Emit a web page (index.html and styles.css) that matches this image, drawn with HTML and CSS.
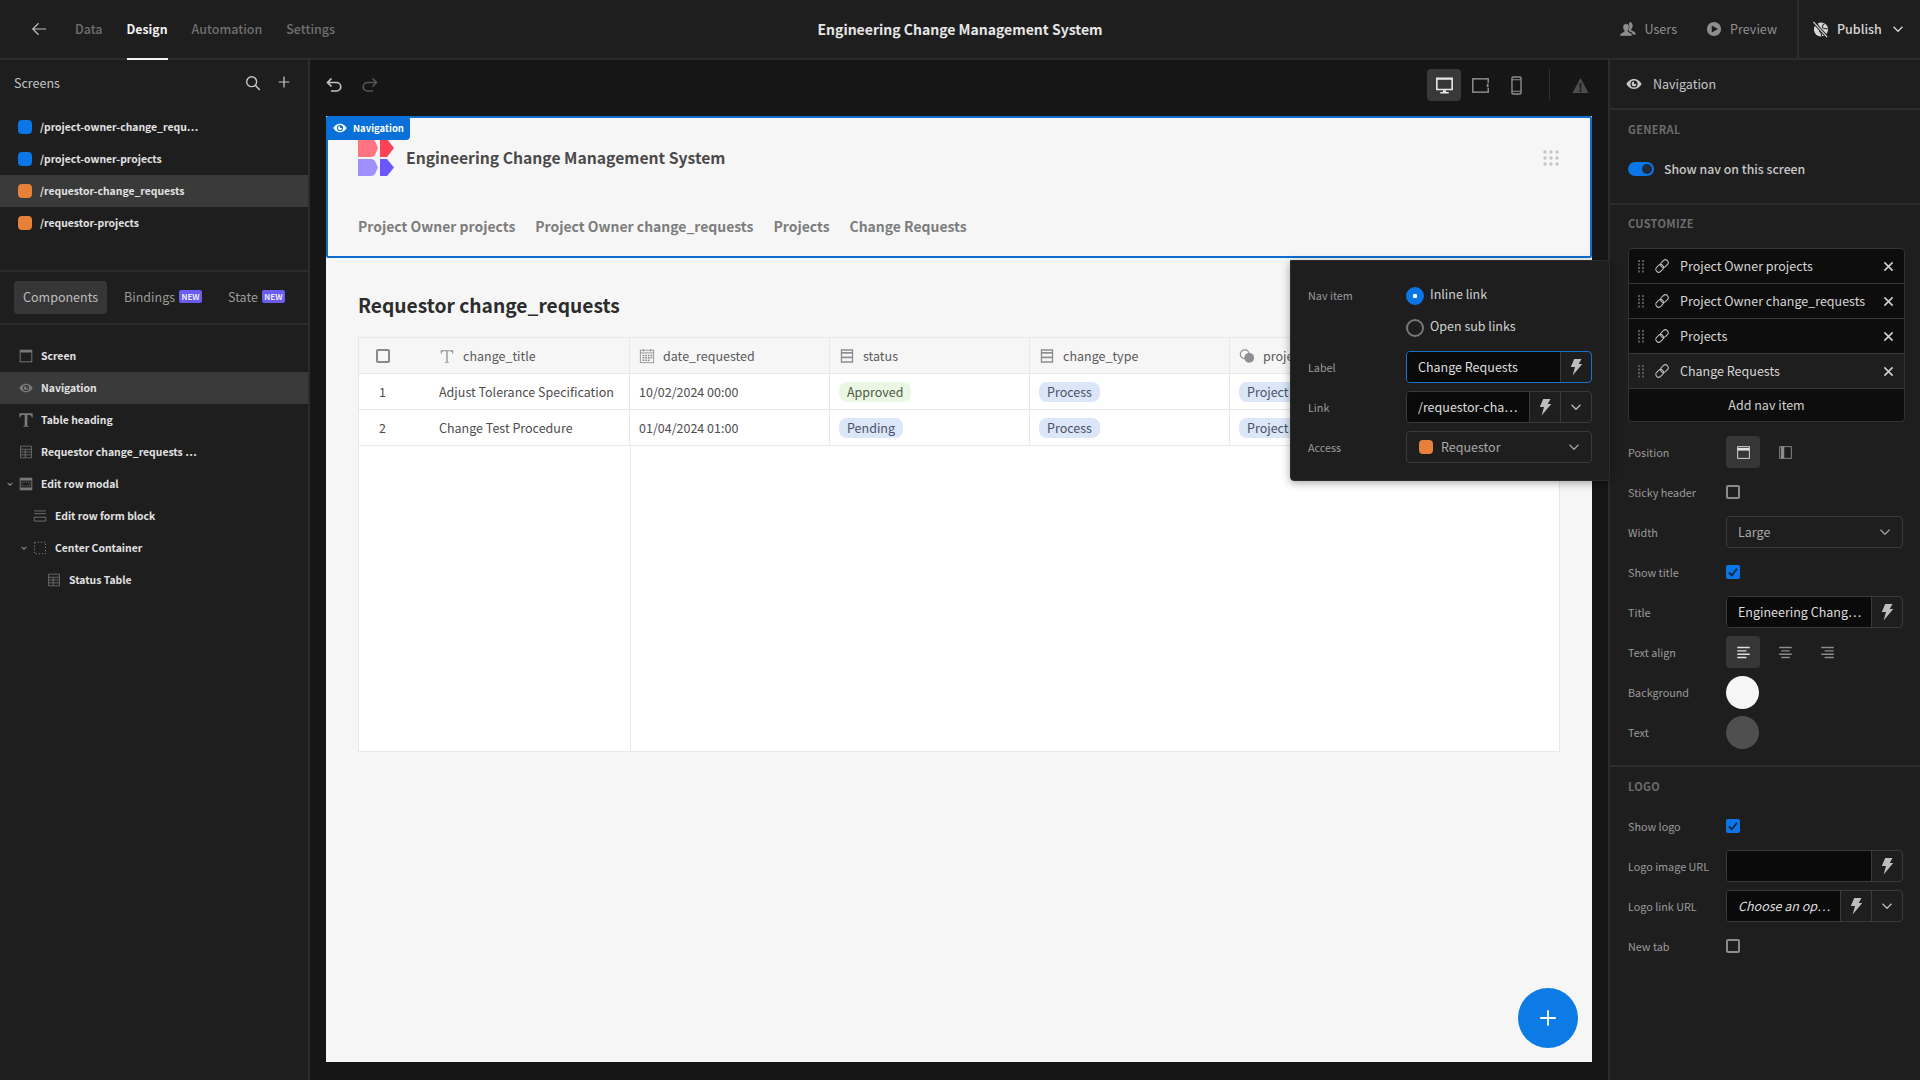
FILE: index.html
```html
<!DOCTYPE html>
<html lang="en">
<head>
<meta charset="utf-8">
<title>Engineering Change Management System</title>
<link rel="stylesheet" href="styles.css">
</head>
<body>
<svg class="defs" width="0" height="0" aria-hidden="true">
  <symbol id="i-back" viewBox="0 0 18 18"><path d="M17 9H2M8.5 2.5 2 9l6.5 6.5" fill="none" stroke="currentColor" stroke-width="1.3"/></symbol>
  <symbol id="i-search" viewBox="0 0 18 18"><circle cx="7.5" cy="7.5" r="5.6" fill="none" stroke="currentColor" stroke-width="1.6"/><path d="m11.6 11.6 5 5.2" stroke="currentColor" stroke-width="1.8"/></symbol>
  <symbol id="i-plus" viewBox="0 0 18 18"><path d="M9 2v14M2 9h14" stroke="currentColor" stroke-width="1.6"/></symbol>
  <symbol id="i-undo" viewBox="0 0 18 18"><path d="M6.5 2.5 2.5 6.5l4 4M3 6.5h8.5a4 4 0 0 1 0 8.5H6" fill="none" stroke="currentColor" stroke-width="1.7"/></symbol>
  <symbol id="i-redo" viewBox="0 0 18 18"><path d="m11.5 2.5 4 4-4 4M15 6.5H6.5a4 4 0 0 0 0 8.5H12" fill="none" stroke="currentColor" stroke-width="1.7"/></symbol>
  <symbol id="i-eye" viewBox="0 0 18 18"><path fill-rule="evenodd" d="M9 3.5C4.8 3.5 1.6 6.6.5 9c1.1 2.4 4.3 5.5 8.5 5.5s7.4-3.1 8.5-5.5C16.400 6.600 13.200 3.500 9 3.500zM9 13A4 4 0 1 1 9 5a4 4 0 0 1 0 8z" fill="currentColor"/><path d="M9 6.300A2.700 2.700 0 1 0 11.700 9H9z" fill="currentColor"/></symbol>
  <symbol id="i-screen" viewBox="0 0 18 18"><rect x="1.500" y="1.500" width="15" height="15" fill="none" stroke="currentColor" stroke-width="1.200"/><rect x="1.500" y="1.500" width="15" height="3" fill="currentColor"/></symbol>
  <symbol id="i-t" viewBox="0 0 18 18"><path d="M1.500 1.500h15v4.700h-1c-.2-1.700-1-2.900-2.700-2.900h-2.300v11.500c0 .8.500 1 1.800 1.100v.8H5.700v-.8c1.300-.1 1.800-.3 1.800-1.100V3.300H5.200c-1.700 0-2.500 1.200-2.700 2.900h-1z" fill="currentColor"/></symbol>
  <symbol id="i-tt" viewBox="0 0 18 18"><path d="M2 2.500h14v4h-.8c-.2-1.500-.8-2.900-2.500-2.900H9.700v11.700c0 .5.500.6 1.600.7v.5H6.700V16c1.100-.1 1.600-.2 1.600-.7V3.600H5.300c-1.700 0-2.300 1.400-2.500 2.900H2z" fill="currentColor"/></symbol>
  <symbol id="i-table" viewBox="0 0 18 18"><path d="M2 1.500h14v15H2zM2 5.500h14M2 9h14M2 12.700h14M8 5.500v11" fill="none" stroke="currentColor" stroke-width="1"/></symbol>
  <symbol id="i-modal" viewBox="0 0 18 18"><rect x="1.500" y="1.500" width="15" height="15" fill="none" stroke="currentColor" stroke-width="1.200"/><rect x="1.500" y="1.500" width="15" height="3" fill="currentColor"/><rect x="1.500" y="13.500" width="15" height="3" fill="currentColor"/><rect x="4" y="6.500" width="10" height="5" fill="none" stroke="currentColor" stroke-width="1" stroke-dasharray="1.500 1"/></symbol>
  <symbol id="i-form" viewBox="0 0 18 18"><path d="M1.500 2.500h15M1.500 6h15M1.500 10.500h15v5h-15z" fill="none" stroke="currentColor" stroke-width="1.100"/></symbol>
  <symbol id="i-dashed" viewBox="0 0 18 18"><rect x="2" y="1.500" width="14" height="15" fill="none" stroke="currentColor" stroke-width="1.300" stroke-dasharray="1.600 2.400"/></symbol>
  <symbol id="i-caret" viewBox="0 0 10 10"><path d="m2 3.500 3 3 3-3" fill="none" stroke="currentColor" stroke-width="1.300"/></symbol>
  <symbol id="i-chev" viewBox="0 0 12 12"><path d="m1.500 3.800 4.500 4.500 4.500-4.500" fill="none" stroke="currentColor" stroke-width="1.300"/></symbol>
  <symbol id="i-bolt" viewBox="0 0 18 18"><path d="M7.200 1h7.300l-2.800 5h3.600L5.600 17.500l2.400-8.600H3.800z" fill="currentColor"/></symbol>
  <symbol id="i-link" viewBox="0 0 18 18"><g transform="rotate(-45 9 9)" fill="none" stroke="currentColor" stroke-width="1.200"><rect x=".5" y="5.800" width="9.500" height="6.400" rx="3.200"/><rect x="8" y="5.800" width="9.500" height="6.400" rx="3.200"/></g></symbol>
  <symbol id="i-grip" viewBox="0 0 8 14"><path d="M1 1h2v2H1zM5 1h2v2H5zM1 4.500h2v2H1zM5 4.500h2v2H5zM1 8h2v2H1zM5 8h2v2H5zM1 11.500h2v2H1zM5 11.500h2v2H5z" fill="currentColor"/></symbol>
  <symbol id="i-x" viewBox="0 0 12 12"><path d="m1.500 1.500 9 9M10.500 1.500l-9 9" stroke="currentColor" stroke-width="1.700"/></symbol>
  <symbol id="i-users" viewBox="0 0 18 18"><path d="M10.500 1c2.500 0 4 2 3.700 4.500-.2 1.500-.9 3-1.800 3.800 0 1 .6 1.400 2 2 1.400.6 3 1.200 3.300 3v1h-3.200c-.4-2-2-2.800-3.500-3.500-1-.4-1.500-.8-1.500-1.500" fill="currentColor"/><path d="M7 3c2.300 0 3.700 1.900 3.400 4.200-.2 1.500-.8 2.800-1.700 3.600 0 1 .6 1.400 1.900 2 1.400.6 2.800 1.200 3 2.800v1.400H0v-1.400c.2-1.600 1.600-2.200 3-2.800 1.300-.6 1.900-1 1.900-2C4 10 3.400 8.700 3.300 7.200 3 4.900 4.600 3 7 3z" fill="currentColor" stroke="#1e1e1e" stroke-width=".6"/></symbol>
  <symbol id="i-play" viewBox="0 0 18 18"><path fill-rule="evenodd" d="M9 1a8 8 0 1 0 0 16A8 8 0 0 0 9 1zM6.500 5l7 4-7 4z" fill="currentColor"/></symbol>
  <symbol id="i-globe" viewBox="0 0 18 18"><circle cx="9.500" cy="9" r="7.500" fill="currentColor"/><path d="M5 1.500c2 2 .5 3 2.500 5s-1 3.500 1 5 1 3 2 5M13 3c-1 1.500-2.500 1.500-2 3.500s3.500 1 5.500 2" fill="none" stroke="#1e1e1e" stroke-width="1.100"/><path d="M1.500 1 16 17" stroke="#1e1e1e" stroke-width="3.200"/><path d="M1.500 1 16 17" stroke="currentColor" stroke-width="1.300"/></symbol>
  <symbol id="i-desktop" viewBox="0 0 18 18"><path fill-rule="evenodd" d="M1 1.500h16v12H1zM2.500 3.500v8.500h13V3.500z" fill="currentColor"/><path d="M7.500 13.500h3v1.700H13v1.300H5v-1.300h2.500z" fill="currentColor"/></symbol>
  <symbol id="i-tablet" viewBox="0 0 18 18"><rect x="1.700" y="2.700" width="14.600" height="12.600" fill="none" stroke="currentColor" stroke-width="1.400"/><rect x="14.500" y="7" width="2.500" height="4" fill="currentColor" stroke="#1a1a1a" stroke-width=".8"/></symbol>
  <symbol id="i-phone" viewBox="0 0 18 18"><rect x="4.700" y="1" width="8.600" height="16" rx="1" fill="none" stroke="currentColor" stroke-width="1.300"/><path d="M4.700 3.500h8.600M4.700 14.500h8.600" stroke="currentColor" stroke-width="1"/></symbol>
  <symbol id="i-alert" viewBox="0 0 18 18"><path fill-rule="evenodd" d="M9 1 .5 17h17zM8 6.500h2l-.3 6H8.300zM8 13.500h2v2H8z" fill="currentColor"/></symbol>
  <symbol id="i-postop" viewBox="0 0 18 18"><rect x="2" y="2" width="14" height="14" fill="none" stroke="currentColor" stroke-width="1.100"/><rect x="2" y="3.500" width="14" height="3.200" fill="currentColor"/></symbol>
  <symbol id="i-posleft" viewBox="0 0 18 18"><rect x="2" y="2" width="14" height="14" fill="none" stroke="currentColor" stroke-width="1.100"/><rect x="3.500" y="2" width="4" height="14" fill="currentColor"/></symbol>
  <symbol id="i-aleft" viewBox="0 0 18 18"><path d="M1.500 3h15M1.500 7h11M1.500 11h15M1.500 15h11" stroke="currentColor" stroke-width="1.700"/></symbol>
  <symbol id="i-acenter" viewBox="0 0 18 18"><path d="M1.500 3h15M4 7h10M1.500 11h15M4 15h10" stroke="currentColor" stroke-width="1.700"/></symbol>
  <symbol id="i-aright" viewBox="0 0 18 18"><path d="M1.500 3h15M5.500 7h11M1.500 11h15M5.500 15h11" stroke="currentColor" stroke-width="1.700"/></symbol>
  <symbol id="i-cal" viewBox="0 0 18 18"><rect x="1.500" y="2.500" width="15" height="14" fill="none" stroke="currentColor" stroke-width="1"/><path d="M1.500 5.500h15M5 1v3M13 1v3" stroke="currentColor" stroke-width="1"/><path d="M4 7.500h2v1.700H4zM7 7.500h2v1.700H7zM10 7.500h2v1.700h-2zM13 7.500h2v1.700h-2zM4 10.200h2v1.700H4zM7 10.200h2v1.700H7zM10 10.200h2v1.700h-2zM13 10.200h2v1.700h-2zM4 13h2v1.700H4zM7 13h2v1.700H7zM10 13h2v1.700h-2z" fill="currentColor"/></symbol>
  <symbol id="i-opts" viewBox="0 0 18 18"><path fill-rule="evenodd" d="M2 1.500h14v15H2zM3.500 3v1.500h11V3zM3.500 6.500v3h11v-3zM3.500 11.500V15h11v-3.500z" fill="currentColor"/></symbol>
  <symbol id="i-rel" viewBox="0 0 18 18"><circle cx="6.500" cy="7" r="5" fill="none" stroke="currentColor" stroke-width="1.400"/><circle cx="11.500" cy="11" r="5.500" fill="currentColor"/></symbol>
</svg>

<header class="topbar">
  <div class="top-left">
    <svg class="ic-back"><use href="#i-back"/></svg>
    <nav class="tabs">
      <span class="tab">Data</span>
      <span class="tab tab-active">Design</span>
      <span class="tab">Automation</span>
      <span class="tab">Settings</span>
    </nav>
  </div>
  <div class="app-title">Engineering Change Management System</div>
  <div class="top-right">
    <span class="top-action"><svg class="ic-16"><use href="#i-users"/></svg>Users</span>
    <span class="top-action"><svg class="ic-16"><use href="#i-play"/></svg>Preview</span>
    <span class="publish"><svg class="ic-17"><use href="#i-globe"/></svg><span class="publish-text">Publish</span><svg class="ic-12"><use href="#i-chev"/></svg></span>
  </div>
</header>

<div class="workspace">
  <aside class="left">
    <div class="screens-head">
      <span class="screens-title">Screens</span>
      <svg class="ic-16 head-search"><use href="#i-search"/></svg>
      <svg class="ic-14"><use href="#i-plus"/></svg>
    </div>
    <ul class="screen-list">
      <li class="row"><i class="dot dot-blue"></i>/project-owner-change_requ…</li>
      <li class="row"><i class="dot dot-blue"></i>/project-owner-projects</li>
      <li class="row row-selected"><i class="dot dot-orange"></i>/requestor-change_requests</li>
      <li class="row"><i class="dot dot-orange"></i>/requestor-projects</li>
    </ul>
    <div class="side-tabs">
      <span class="side-tab side-tab-active">Components</span>
      <span class="side-tab">Bindings<b class="new">NEW</b></span>
      <span class="side-tab">State<b class="new">NEW</b></span>
    </div>
    <ul class="tree">
      <li class="node"><svg class="ic-14 tree-ic"><use href="#i-screen"/></svg>Screen</li>
      <li class="node row-selected"><svg class="ic-14 tree-ic"><use href="#i-eye"/></svg>Navigation</li>
      <li class="node"><svg class="ic-16 tree-ic tree-t"><use href="#i-t"/></svg>Table heading</li>
      <li class="node"><svg class="ic-14 tree-ic"><use href="#i-table"/></svg>Requestor change_requests …</li>
      <li class="node"><svg class="caret"><use href="#i-caret"/></svg><svg class="ic-14 tree-ic"><use href="#i-modal"/></svg>Edit row modal</li>
      <li class="node node-1"><svg class="ic-14 tree-ic"><use href="#i-form"/></svg>Edit row form block</li>
      <li class="node node-1"><svg class="caret"><use href="#i-caret"/></svg><svg class="ic-14 tree-ic"><use href="#i-dashed"/></svg>Center Container</li>
      <li class="node node-2"><svg class="ic-14 tree-ic"><use href="#i-table"/></svg>Status Table</li>
    </ul>
  </aside>

  <main class="center">
    <div class="toolbar">
      <svg class="ic-18 tool-undo"><use href="#i-undo"/></svg>
      <svg class="ic-18 tool-redo"><use href="#i-redo"/></svg>
      <span class="spacer"></span>
      <span class="device device-active"><svg class="ic-19"><use href="#i-desktop"/></svg></span>
      <span class="device"><svg class="ic-19"><use href="#i-tablet"/></svg></span>
      <span class="device"><svg class="ic-19"><use href="#i-phone"/></svg></span>
      <span class="tool-sep"></span>
      <svg class="ic-17 tool-alert"><use href="#i-alert"/></svg>
    </div>

    <section class="canvas">
      <span class="canvas-tag"><svg class="ic-14"><use href="#i-eye"/></svg>Navigation</span>
      <div class="appnav">
        <div class="brand">
          <svg class="logo" viewBox="0 0 36 37"><path d="M0 0h13c2 0 3 1 4 2l3 7-3 7c-1 1-2 2-4 2H0z" fill="#ff7480"/><path d="M22 0h7l7 9-7 9h-7z" fill="#ff4258"/><path d="M0 20h13c2 0 3 1 4 2l3 6.500-3 6.500c-1 1-2 2-4 2H0z" fill="#9f90ff"/><path d="M22 20h7l7 8.500-7 8.500h-7z" fill="#6b57ff"/></svg>
          <span class="brand-name">Engineering Change Management System</span>
          <svg class="dots" viewBox="0 0 16 16"><g fill="#c6c6c6"><circle cx="2" cy="2" r="1.700"/><circle cx="8" cy="2" r="1.700"/><circle cx="14" cy="2" r="1.700"/><circle cx="2" cy="8" r="1.700"/><circle cx="8" cy="8" r="1.700"/><circle cx="14" cy="8" r="1.700"/><circle cx="2" cy="14" r="1.700"/><circle cx="8" cy="14" r="1.700"/><circle cx="14" cy="14" r="1.700"/></g></svg>
        </div>
        <div class="app-links">
          <span>Project Owner projects</span>
          <span>Project Owner change_requests</span>
          <span>Projects</span>
          <span>Change Requests</span>
        </div>
      </div>

      <div class="page">
        <h1 class="page-title">Requestor change_requests</h1>
        <div class="grid-table">
          <div class="tr tr-head">
            <div class="td td-check"><i class="check"></i></div>
            <div class="td td-main th"><svg class="ic-16 th-ic"><use href="#i-tt"/></svg>change_title</div>
            <div class="td th"><svg class="ic-16 th-ic"><use href="#i-cal"/></svg>date_requested</div>
            <div class="td th"><svg class="ic-16 th-ic"><use href="#i-opts"/></svg>status</div>
            <div class="td th"><svg class="ic-16 th-ic"><use href="#i-opts"/></svg>change_type</div>
            <div class="td th"><svg class="ic-16 th-ic"><use href="#i-rel"/></svg>project</div>
          </div>
          <div class="tr">
            <div class="td td-num">1</div>
            <div class="td td-title">Adjust Tolerance Specification</div>
            <div class="td">10/02/2024 00:00</div>
            <div class="td"><span class="pill pill-green">Approved</span></div>
            <div class="td"><span class="pill pill-blue">Process</span></div>
            <div class="td"><span class="pill pill-blue">Project A</span></div>
          </div>
          <div class="tr">
            <div class="td td-num">2</div>
            <div class="td td-title">Change Test Procedure</div>
            <div class="td">01/04/2024 01:00</div>
            <div class="td"><span class="pill pill-blue">Pending</span></div>
            <div class="td"><span class="pill pill-blue">Process</span></div>
            <div class="td"><span class="pill pill-blue">Project A</span></div>
          </div>
          <div class="table-rest"><div class="rest-col"></div></div>
        </div>
      </div>
      <span class="fab"><svg class="ic-20"><use href="#i-plus"/></svg></span>
    </section>

    <div class="popover">
      <div class="prop">
        <span class="prop-label">Nav item</span>
        <span class="radio radio-on">Inline link</span>
      </div>
      <div class="prop prop-tight">
        <span></span>
        <span class="radio">Open sub links</span>
      </div>
      <div class="prop">
        <span class="prop-label">Label</span>
        <div class="field field-focus"><span class="field-input">Change Requests</span><span class="field-btn"><svg class="ic-18"><use href="#i-bolt"/></svg></span></div>
      </div>
      <div class="prop">
        <span class="prop-label">Link</span>
        <div class="field"><span class="field-input">/requestor-cha…</span><span class="field-btn"><svg class="ic-18"><use href="#i-bolt"/></svg></span><span class="field-btn"><svg class="ic-12"><use href="#i-chev"/></svg></span></div>
      </div>
      <div class="prop">
        <span class="prop-label">Access</span>
        <div class="select"><i class="dot dot-orange"></i><span class="select-text">Requestor</span><svg class="ic-12"><use href="#i-chev"/></svg></div>
      </div>
    </div>
  </main>

  <aside class="right">
    <div class="right-head"><svg class="ic-16"><use href="#i-eye"/></svg>Navigation</div>

    <section class="group">
      <h2 class="group-title">GENERAL</h2>
      <div class="toggle-row"><i class="toggle"></i>Show nav on this screen</div>
    </section>

    <section class="group group-custom">
      <h2 class="group-title">CUSTOMIZE</h2>
      <div class="nav-list">
        <div class="nav-row"><svg class="grip"><use href="#i-grip"/></svg><svg class="ic-16"><use href="#i-link"/></svg><span class="nav-row-text">Project Owner projects</span><svg class="ic-11"><use href="#i-x"/></svg></div>
        <div class="nav-row"><svg class="grip"><use href="#i-grip"/></svg><svg class="ic-16"><use href="#i-link"/></svg><span class="nav-row-text">Project Owner change_requests</span><svg class="ic-11"><use href="#i-x"/></svg></div>
        <div class="nav-row"><svg class="grip"><use href="#i-grip"/></svg><svg class="ic-16"><use href="#i-link"/></svg><span class="nav-row-text">Projects</span><svg class="ic-11"><use href="#i-x"/></svg></div>
        <div class="nav-row nav-row-hover"><svg class="grip"><use href="#i-grip"/></svg><svg class="ic-16"><use href="#i-link"/></svg><span class="nav-row-text">Change Requests</span><svg class="ic-11"><use href="#i-x"/></svg></div>
        <div class="nav-add">Add nav item</div>
      </div>
      <div class="props">
        <div class="prop">
          <span class="prop-label">Position</span>
          <div class="seg"><span class="seg-btn seg-on"><svg class="ic-15"><use href="#i-postop"/></svg></span><span class="seg-btn seg-dim"><svg class="ic-15"><use href="#i-posleft"/></svg></span></div>
        </div>
        <div class="prop"><span class="prop-label">Sticky header</span><i class="check"></i></div>
        <div class="prop">
          <span class="prop-label">Width</span>
          <div class="select"><span class="select-text">Large</span><svg class="ic-12"><use href="#i-chev"/></svg></div>
        </div>
        <div class="prop"><span class="prop-label">Show title</span><i class="check check-on"><svg class="tick" viewBox="0 0 14 14"><path d="m3 7.500 2.800 2.800L11 3.800" fill="none" stroke="#10253f" stroke-width="1.800"/></svg></i></div>
        <div class="prop">
          <span class="prop-label">Title</span>
          <div class="field"><span class="field-input">Engineering Chang…</span><span class="field-btn"><svg class="ic-18"><use href="#i-bolt"/></svg></span></div>
        </div>
        <div class="prop">
          <span class="prop-label">Text align</span>
          <div class="seg"><span class="seg-btn seg-on"><svg class="ic-15"><use href="#i-aleft"/></svg></span><span class="seg-btn seg-dim"><svg class="ic-15"><use href="#i-acenter"/></svg></span><span class="seg-btn seg-dim"><svg class="ic-15"><use href="#i-aright"/></svg></span></div>
        </div>
        <div class="prop"><span class="prop-label">Background</span><i class="swatch swatch-white"></i></div>
        <div class="prop"><span class="prop-label">Text</span><i class="swatch swatch-gray"></i></div>
      </div>
    </section>

    <section class="group group-logo">
      <h2 class="group-title">LOGO</h2>
      <div class="props props-logo">
        <div class="prop"><span class="prop-label">Show logo</span><i class="check check-on"><svg class="tick" viewBox="0 0 14 14"><path d="m3 7.500 2.800 2.800L11 3.800" fill="none" stroke="#10253f" stroke-width="1.800"/></svg></i></div>
        <div class="prop">
          <span class="prop-label">Logo image URL</span>
          <div class="field"><span class="field-input"></span><span class="field-btn"><svg class="ic-18"><use href="#i-bolt"/></svg></span></div>
        </div>
        <div class="prop">
          <span class="prop-label">Logo link URL</span>
          <div class="field"><span class="field-input field-placeholder">Choose an op…</span><span class="field-btn"><svg class="ic-18"><use href="#i-bolt"/></svg></span><span class="field-btn"><svg class="ic-12"><use href="#i-chev"/></svg></span></div>
        </div>
        <div class="prop"><span class="prop-label">New tab</span><i class="check"></i></div>
      </div>
    </section>
  </aside>
</div>
</body>
</html>
```

FILE: styles.css
```css
* { box-sizing: border-box; }
html, body { margin: 0; padding: 0; }
body {
  width: 1920px;
  height: 1080px;
  overflow: hidden;
  display: flex;
  flex-direction: column;
  background: #1e1e1e;
  color: #c8c8c8;
  font-family: "Noto Sans CJK JP", "Noto Sans", sans-serif;
  font-size: 12.5px;
  line-height: 20px;
}
ul { list-style: none; margin: 0; padding: 0; }
h1, h2 { margin: 0; }
i { font-style: normal; display: block; flex: none; }
svg { display: block; flex: none; }
.defs { position: absolute; }
.ic-11 { width: 11px; height: 11px; }
.ic-12 { width: 12px; height: 12px; }
.ic-14 { width: 14px; height: 14px; }
.ic-15 { width: 15px; height: 15px; }
.ic-16 { width: 16px; height: 16px; }
.ic-17 { width: 17px; height: 17px; }
.ic-18 { width: 18px; height: 18px; }
.ic-19 { width: 19px; height: 19px; }
.ic-20 { width: 20px; height: 20px; }

/* top bar */
.topbar {
  flex: none;
  height: 60px;
  display: grid;
  grid-template-columns: 1fr auto 1fr;
  align-items: stretch;
  background: #1e1e1e;
  border-bottom: 2px solid #2c2c2c;
}
.top-left { display: flex; align-items: center; padding-left: 31px; }
.ic-back { width: 16px; height: 16px; color: #c0c0c0; margin-right: 28px; }
.tabs { display: flex; height: 100%; gap: 24px; }
.tab { display: flex; align-items: center; font-size: 12.5px; color: #6f6f6f; font-weight: 500; margin-bottom: -2px; border-bottom: 2px solid transparent; }
.tab-active { color: #f2f2f2; border-bottom-color: #f2f2f2; font-weight: 700; font-size: 12.3px; }
.app-title { align-self: center; font-size: 14px; font-weight: 700; color: #e6e6e6; }
.top-right { display: flex; align-items: center; justify-content: flex-end; }
.top-action { display: flex; align-items: center; gap: 8px; color: #8e8e8e; margin-right: 29px; font-size: 12.6px; }
.top-action:nth-child(2) { margin-right: 20px; }
.publish { height: 100%; display: flex; align-items: center; border-left: 2px solid #2c2c2c; padding-left: 13px; width: 123px; color: #d6d6d6; font-weight: 500; }
.publish-text { margin: 0 10px 0 8px; }

.workspace { flex: 1; display: flex; min-height: 0; }

/* left */
.left { flex: none; width: 310px; border-right: 2px solid #2c2c2c; background: #1e1e1e; }
.screens-head { height: 51px; padding: 12px 17px 0 14px; display: flex; align-items: flex-start; color: #c4c4c4; gap: 16px; }
.screens-title { flex: 1; font-size: 12.5px; line-height: 22px; }
.head-search, .screens-head .ic-14 { margin-top: 3px; }
.row, .node { height: 32px; display: flex; align-items: center; font-weight: 600; color: #e2e2e2; font-size: 10.4px; white-space: nowrap; }
.row { padding-left: 18px; }
.dot { width: 14px; height: 14px; border-radius: 4px; margin-right: 8px; }
.dot-blue { background: #0b76e8; }
.dot-orange { background: #e5813a; }
.row-selected { background: #3a3a3a; }
.screen-list { padding-bottom: 31px; border-bottom: 2px solid #2c2c2c; }
.side-tabs { height: 53px; padding: 9px 14px; border-bottom: 2px solid #2c2c2c; display: flex; align-items: stretch; }
.side-tab { display: flex; align-items: center; padding: 0 9px 2px; color: #9a9a9a; font-size: 12.5px; margin-right: 8px; }
.side-tab-active { background: #363636; border-radius: 4px; color: #bdbdbd; }
.new { margin-left: 4px; width: 23px; height: 13px; line-height: 13px; text-align: center; font-size: 8px; font-weight: 700; color: #e8e8ff; background: #6a5cf0; border-radius: 2px; }
.tree { padding-top: 15px; }
.node { position: relative; padding-left: 19px; }
.node-1 { padding-left: 33px; }
.node-2 { padding-left: 47px; }
.tree-ic { margin-right: 8px; color: #7a7a7a; }
.tree-t { margin: 0 7px 0 -1px; }
.caret { position: absolute; width: 8px; height: 8px; margin-left: -13px; color: #8a8a8a; }

/* center */
.center { flex: 1; position: relative; background: #161616; padding: 0 16px 18px; display: flex; flex-direction: column; min-width: 0; }
.toolbar { flex: none; height: 56px; padding: 9px 0 15px 0; display: flex; align-items: center; }
.tool-undo { margin-left: -1px; color: #c4c4c4; }
.tool-redo { margin-left: 18px; color: #555; }
.spacer { flex: 1; }
.device { width: 34px; height: 32px; margin-left: 2px; display: flex; align-items: center; justify-content: center; color: #8e8e8e; border-radius: 4px; }
.device-active { background: #383838; color: #e8e8e8; }
.tool-sep { width: 1px; height: 32px; background: #2e2e2e; margin: 0 22px 0 16px; }
.tool-alert { color: #4d4d4d; margin-right: 3px; }

.canvas { flex: 1; position: relative; background: #f6f6f6; display: flex; flex-direction: column; min-height: 0; }
.canvas-tag { position: absolute; z-index: 2; left: 0; top: 0; width: 84px; height: 24px; padding-left: 7px; background: #0870d8; border-radius: 4px 4px 4px 0; color: #fff; font-size: 9.5px; font-weight: 700; display: flex; align-items: center; gap: 6px; }
.appnav { height: 142px; flex: none; border: 2px solid #0e6fcf; border-radius: 2px; padding: 21px 30px 0; }
.brand { display: flex; align-items: center; height: 37px; }
.logo { width: 36px; height: 37px; margin-right: 12px; }
.brand-name { flex: 1; font-size: 15.7px; font-weight: 700; color: #4a4a4a; }
.dots { width: 16px; height: 16px; margin-right: 1px; }
.app-links { display: flex; gap: 20px; margin-top: 40px; font-size: 13.95px; font-weight: 700; color: #7d7d7d; }
.page { padding: 32px 32px 0; flex: none; }
.page-title { height: 30px; line-height: 30px; font-size: 19.2px; font-weight: 700; color: #2c2c2c; margin-bottom: 17px; }
.grid-table { height: 415px; background: #fff; border: 1px solid #e8e8e8; display: flex; flex-direction: column; font-size: 12.5px; color: #4d4d4d; }
.tr { height: 36px; flex: none; display: grid; grid-template-columns: 80px 191px 200px 200px 200px 1fr; border-bottom: 1px solid #e8e8e8; }
.tr-head { background: #f6f6f6; }
.td { display: flex; align-items: center; padding-left: 9px; border-right: 1px solid #e8e8e8; white-space: nowrap; overflow: hidden; }
.td:last-child { border-right: 0; }
.td-check, .td-num { border-right: 0; padding-left: 17px; }
.td-num { padding-left: 20px; }
.td-title { padding-left: 0; }
.td-main { padding-left: 0; }
.th-ic { color: #8f8f8f; margin-right: 8px; }
.th { color: #5a5a5a; }
.table-rest { flex: 1; display: flex; }
.rest-col { width: 272px; border-right: 1px solid #e8e8e8; }
.check { width: 14px; height: 14px; border: 2px solid #8a8a8a; border-radius: 2px; background: transparent; }
.check-on { background: #0b76e8; border-color: #0b76e8; position: relative; }
.tick { position: absolute; left: -2px; top: -2px; width: 14px; height: 14px; }
.pill { height: 20px; line-height: 20px; padding: 0 8px; border-radius: 8px; }
.pill-green { background: #eaf8e3; color: #4d5a45; }
.pill-blue { background: #dbe6f8; color: #48536a; }
.fab { position: absolute; right: 14px; bottom: 14px; width: 60px; height: 60px; border-radius: 50%; background: #0d7be6; color: #fff; display: flex; align-items: center; justify-content: center; }

/* properties */
.prop { display: grid; grid-template-columns: 98px 1fr; align-items: center; min-height: 32px; }
.prop-label { color: #9a9a9a; font-size: 10.8px; padding-bottom: 1px; }
.props { display: flex; flex-direction: column; gap: 8px; }
.field { height: 32px; display: flex; align-items: stretch; border: 1px solid #3a3a3a; border-radius: 4px; overflow: hidden; background: #1e1e1e; min-width: 0; }
.field-focus { border-color: #1a73c8; }
.field-input { flex: 1; min-width: 0; background: #0a0a0a; padding: 0 11px; display: flex; align-items: center; color: #dedede; white-space: nowrap; overflow: hidden; }
.field-placeholder { font-style: italic; }
.field-btn { flex: none; width: 31px; border-left: 1px solid #3a3a3a; display: flex; align-items: center; justify-content: center; color: #bdbdbd; }
.select { height: 32px; display: flex; align-items: center; padding: 0 11px 0 11px; border: 1px solid #3a3a3a; border-radius: 4px; color: #a8a8a8; }
.select .dot { margin-left: 1px; }
.select-text { flex: 1; }
.select .ic-12 { color: #a0a0a0; }

/* popover */
.popover { position: absolute; z-index: 3; top: 200px; right: -2px; width: 320px; height: 221px; padding: 18px 17px 0; background: #1e1e1e; border: 1px solid #2c2c2c; border-radius: 0 0 4px 4px; box-shadow: 0 2px 8px rgba(0,0,0,.35); }
.popover .prop { margin-bottom: 8px; }
.popover .prop-tight { margin-top: -8px; }
.radio { position: relative; padding-left: 24px; color: #d0d0d0; margin-top: -2px; }
.radio::before { content: ""; position: absolute; left: 0; top: 3px; width: 14px; height: 14px; border-radius: 50%; border: 2px solid #777; }
.radio-on::before { background: radial-gradient(circle, #fff 0 2px, #0b76e8 2.500px); border-color: #0b76e8; }

/* right */
.right { flex: none; width: 312px; border-left: 2px solid #2c2c2c; background: #1e1e1e; display: flex; flex-direction: column; }
.right-head { flex: none; height: 50px; padding: 0 0 1px 16px; display: flex; align-items: center; gap: 11px; border-bottom: 2px solid #2c2c2c; color: #c6c6c6; }
.group { padding: 12px 0 18px 18px; border-bottom: 2px solid #2c2c2c; }
.group-custom { padding-top: 11px; padding-bottom: 17px; height: 562px; }
.group-logo { border-bottom: 0; flex: 1; }
.group-title { font-size: 11px; line-height: 14px; font-weight: 700; letter-spacing: .3px; color: #6c6c6c; }
.toggle-row { margin-top: 17px; height: 32px; padding-bottom: 1px; display: flex; align-items: center; color: #c8c8c8; font-size: 12.3px; font-weight: 500; }
.toggle { position: relative; width: 26px; height: 14px; margin-right: 10px; border-radius: 7px; background: #0b76e8; }
.toggle::after { content: ""; position: absolute; right: 2px; top: 2px; width: 10px; height: 10px; border-radius: 50%; background: #1e2a38; }
.nav-list { width: 277px; margin-top: 18px; border: 1px solid #333; border-radius: 4px; overflow: hidden; background: #0d0d0d; }
.nav-row { height: 35px; display: flex; align-items: center; border-bottom: 1px solid #3a3a3a; padding: 0 10px 0 8px; color: #d6d6d6; }
.nav-row-hover { background: #1e1e1e; }
.nav-row .ic-16 { margin-left: 9px; color: #bdbdbd; }
.nav-row .ic-11 { color: #d0d0d0; }
.grip { width: 8px; height: 14px; color: #5a5a5a; }
.nav-row-text { flex: 1; margin-left: 10px; white-space: nowrap; }
.nav-add { height: 32px; line-height: 32px; text-align: center; color: #d0d0d0; }
.group-custom .props { width: 275px; margin-top: 14px; }
.props-logo { width: 275px; margin-top: 17px; }
.seg { display: flex; gap: 8px; }
.seg-btn { width: 34px; height: 32px; display: flex; align-items: center; justify-content: center; color: #e0e0e0; border-radius: 4px; }
.seg-on { background: #363636; }
.seg-dim { color: #8c8c8c; }
.swatch { width: 33px; height: 33px; margin: -1px 0; border-radius: 50%; }
.swatch-white { background: #f6f6f6; }
.swatch-gray { background: #4f4f4f; }
```
